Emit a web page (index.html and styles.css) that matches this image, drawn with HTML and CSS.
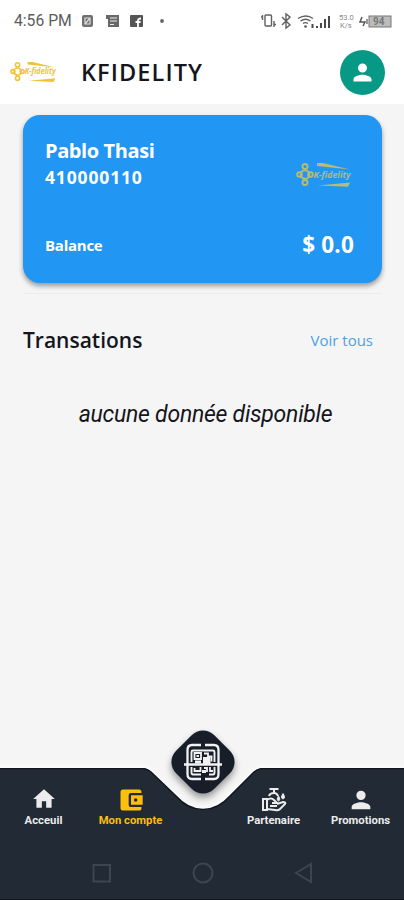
FILE: index.html
```html
<!DOCTYPE html>
<html lang="fr">
<head>
  <meta charset="UTF-8">
  <meta name="viewport" content="width=device-width, initial-scale=1">
  <title>KFIDELITY</title>
  <link rel="stylesheet" href="styles.css">
</head>
<body>
<svg width="0" height="0" class="defs">
  <defs>
    <symbol id="logo" viewBox="0 0 56 26">
      <g fill="none" stroke="currentColor" stroke-width="1.900">
        <circle cx="9" cy="4.500" r="2.500"/>
        <circle cx="9" cy="20.500" r="2.500"/>
        <circle cx="3.500" cy="12.500" r="2.300"/>
        <circle cx="14.500" cy="12.500" r="2.300"/>
        <circle cx="9" cy="12.500" r="4.300"/>
      </g>
      <path d="M21 1 L27 1 L54 7.500 L38 5.800 L21 4 Z" fill="currentColor"/>
      <path d="M22 23.500 L54 20.500 L52 24.800 Z" fill="currentColor"/>
      <text x="17.500" y="15.500" class="logo-text" textLength="37" lengthAdjust="spacingAndGlyphs">K-fidelity</text>
    </symbol>
    <symbol id="person" viewBox="0 0 24 24">
      <path d="M12 12a4 4 0 1 0 0-8 4 4 0 0 0 0 8zm0 2c-2.670 0-8 1.340-8 4v2h16v-2c0-2.660-5.330-4-8-4z" fill="currentColor"/>
    </symbol>
  </defs>
</svg>

<div class="status">
  <span class="time">4:56 PM</span>
  <svg class="status-left" width="88" height="16" viewBox="0 0 88 16">
    <rect x="2" y="2" width="11" height="12" rx="2" fill="#707070"/>
    <path d="M5 11V5h5v6zM5 11l5-6" fill="none" stroke="#ddd" stroke-width="1.200"/>
    <path d="M26 2h13v12H28V6h-2z" fill="#686868"/>
    <path d="M30 5h7M30 8h7M30 11.500h4" stroke="#eee" stroke-width="1.200"/>
    <rect x="50" y="2" width="13" height="12" rx="1" fill="#555"/>
    <path d="M58 14V7.500q0-2 3-2M55.500 9h5" fill="none" stroke="#fff" stroke-width="1.800"/>
    <circle cx="82" cy="8" r="1.900" fill="#666"/>
  </svg>
  <svg class="status-right" width="134" height="18" viewBox="0 0 134 18">
    <g fill="none" stroke="#606060" stroke-width="1.400">
      <rect x="5" y="3" width="6.500" height="11" rx="1"/>
      <path d="M2.500 3v5M1 5h2M14 9v6M14 12.500h2"/>
      <path d="M22 5l8 8-4 3V2l4 3-8 8"/>
      <path d="M38 6.500q8-5 15 0M40.500 9q5-3.500 10 0M43 11.500q2.500-1.800 5 0"/>
    </g>
    <circle cx="45.500" cy="14.500" r="1.300" fill="#555"/>
    <path d="M52.500 12v4M57 14v2M61 11v5M65 7v9M69 4v12" stroke="#484848" stroke-width="2"/>
    <text x="79" y="8" class="rate">53.0</text>
    <text x="80" y="16" class="rate">K/s</text>
    <path d="M102 5l-2 5h5l-2 4" fill="none" stroke="#555" stroke-width="1.500"/>
    <rect x="109" y="4" width="22" height="11" fill="#bcbcbc" stroke="#777"/>
    <path d="M107 7v5" stroke="#777" stroke-width="1.500"/>
    <text x="113" y="13" class="battery">94</text>
  </svg>
</div>

<header class="appbar">
  <svg class="appbar-logo" width="47" height="22"><use href="#logo"/></svg>
  <h1>KFIDELITY</h1>
  <div class="avatar"><svg width="27" height="27"><use href="#person"/></svg></div>
</header>

<main>
  <section class="card">
    <div class="card-top">
      <div>
        <div class="name">Pablo Thasi</div>
        <div class="number">410000110</div>
      </div>
      <svg class="card-logo" width="56" height="26"><use href="#logo"/></svg>
    </div>
    <div class="card-bottom">
      <span class="balance">Balance</span>
      <span class="amount">$ 0.0</span>
    </div>
  </section>
  <div class="divider"></div>
  <div class="section-head">
    <h2>Transations</h2>
    <a class="more">Voir tous</a>
  </div>
  <p class="empty"><span>aucune donnée disponible</span></p>
</main>

<footer class="bottom">
  <svg class="bottom-bg" width="404" height="132" viewBox="0 0 404 132">
    <path d="M0 0H142Q147 0 151 4L176 28C192 46 214 46 230 28L254 4Q258 0 264 0H404V132H0Z" fill="#222a35"/>
    <path d="M0 .5H142Q147 .5 151 4L176 28C192 46 214 46 230 28L254 4Q258 .5 264 .5H404" fill="none" stroke="#10151e" stroke-width="1.500"/>
    <path d="M0 131.500H404" stroke="#10141b"/>
  </svg>
  <div class="scan">
    <svg width="38" height="38" viewBox="0 0 38 38" fill="none" stroke="#f2f2f2">
      <path d="M17 2H8Q3.500 2 3.500 7V31Q3.500 36 8 36H17M21 2H30Q34.500 2 34.500 7V31Q34.500 36 30 36H21" stroke-width="2.300"/>
      <path d="M29 7.500H9Q7.500 7.500 7.500 9V19M29 7.500Q30.500 7.500 30.500 9V19M7.500 24V29.500Q7.500 31.500 9 31.500H17M30.500 24V29.500Q30.500 31.500 29 31.500H25" stroke-width="1.900"/>
      <path d="M10.500 10h6.500v6h-6.500zM20 10.500h4v3h3.500v5M10.500 25v3h6v-4M20 25h3v4M26 24v4h3" stroke-width="1.800"/>
      <path d="M12.500 12h2.500v2h-2.500zM19 14h7.500v8H19zM11 17.500h6v3h-6zM18 27h4v3h-4z" fill="#f2f2f2" stroke="none"/>
      <path d="M0 21.500H38" stroke-width="2.500"/>
    </svg>
  </div>
  <nav>
    <div class="tab tab-home">
      <svg width="26" height="26" viewBox="0 0 24 24"><path d="M10 20v-6h4v6h5v-8h3L12 3 2 12h3v8z" fill="currentColor"/></svg>
      <span>Acceuil</span>
    </div>
    <div class="tab tab-account active">
      <svg width="28" height="28" viewBox="0 0 24 24">
        <path d="M21 18v1c0 1.100-.9 2-2 2H5a2 2 0 0 1-2-2V5c0-1.100.89-2 2-2h14c1.100 0 2 .9 2 2v1h-9a2 2 0 0 0-2 2v8c0 1.100.89 2 2 2h9zm-9-2h10V8H12v8zm4-2.500a1.500 1.500 0 1 1 0-3 1.500 1.500 0 0 1 0 3z" fill="currentColor"/>
      </svg>
      <span>Mon compte</span>
    </div>
    <div class="tab tab-partner">
      <svg width="26" height="26" viewBox="0 0 26 26" fill="none" stroke="currentColor" stroke-width="2">
        <path d="M8.500 3h9M13 3v4M8 10q1-3 5-3 3 0 4 3M2 13h4v11H2zM6 14q4-3 7 0l3 3h-5M16 18l6-2q3 0 2 2l-5 5q-2 2-5 1l-8-1M9 20h7"/>
        <path d="M22 7.500q3 4.500 0 5.500-3-1 0-5.500zM17.500 10q2.500 4 0 5-2.500-1 0-5z" fill="currentColor" stroke-width="1"/>
      </svg>
      <span>Partenaire</span>
    </div>
    <div class="tab tab-promo">
      <svg width="28" height="28"><use href="#person"/></svg>
      <span>Promotions</span>
    </div>
  </nav>
  <div class="system">
    <svg width="222" height="24" viewBox="0 0 222 24" fill="none" stroke="#3d454f" stroke-width="2">
      <rect x="1.500" y="4" width="16.500" height="16.500"/>
      <circle cx="111" cy="12" r="9.500"/>
      <path d="M204 12L219 3V21Z"/>
    </svg>
  </div>
</footer>
</body>
</html>
```
FILE: styles.css
```css
* { box-sizing: border-box; }
body {
  margin: 0;
  width: 404px;
  height: 900px;
  display: flex;
  flex-direction: column;
  overflow: hidden;
  background: #f5f5f5;
  color: #15151c;
  font-family: "Open Sans", "Noto Sans", sans-serif;
}
svg { display: block; flex: none; }
.defs { position: absolute; }
.status {
  height: 42px;
  padding: 0 10px 0 14px;
  background: #fff;
  display: flex;
  align-items: center;
}
.time {
  width: 66px;
  font: 15.7px/20px Roboto, sans-serif;
  color: #5c5c5c;
  white-space: nowrap;
}
.status-right { margin-left: auto; }
.rate { font: 7.5px Roboto, sans-serif; fill: #888; }
.battery { font: bold 10px Roboto, sans-serif; fill: #777; }
.appbar {
  height: 62px;
  padding: 0 19.5px 2px 10px;
  background: #fff;
  display: flex;
  align-items: center;
}
.appbar-logo { color: #eec33b; }
.logo-text {
  font: italic bold 9.5px "Open Sans", sans-serif;
  fill: currentColor;
}
h1 {
  margin: 0 0 0 24px;
  font-size: 23.5px;
  line-height: 30px;
  font-weight: 600;
  letter-spacing: 1.1px;
}
.avatar {
  width: 45px;
  height: 45px;
  margin-left: auto;
  border-radius: 50%;
  background: #079985;
  color: #fff;
  display: grid;
  place-items: center;
}
main {
  flex: 1;
  padding: 11px 22px 0 23px;
}
.card {
  height: 168px;
  padding: 22px 28px 20px 22px;
  border-radius: 17px;
  background: #2196f3;
  box-shadow: 0 3px 5px rgba(0, 0, 0, 0.38);
  color: #fff;
  display: flex;
  flex-direction: column;
  justify-content: space-between;
}
.card-top, .card-bottom, .section-head {
  display: flex;
  justify-content: space-between;
}
.name {
  font-size: 20px;
  line-height: 28px;
  font-weight: 700;
  letter-spacing: -0.4px;
}
.number {
  font-size: 17.5px;
  line-height: 25px;
  font-weight: 700;
  letter-spacing: 0.85px;
}
.card-logo {
  margin: 25px 2px 0 0;
  color: #b6bc71;
}
.card-bottom { align-items: center; }
.balance {
  font-size: 15px;
  font-weight: 700;
  letter-spacing: -0.25px;
}
.amount {
  font-size: 22.5px;
  line-height: 36px;
  font-weight: 700;
  letter-spacing: 0.2px;
}
.divider {
  height: 1px;
  margin-top: 10px;
  background: #ececec;
}
.section-head {
  margin-top: 30px;
  padding-right: 9px;
  align-items: center;
}
h2 {
  margin: 0;
  font-size: 21px;
  line-height: 32px;
  font-weight: 600;
}
.more {
  font-size: 15px;
  color: #4ba1e8;
}
.empty {
  margin: 44px 0 0;
  padding-left: 6px;
  text-align: center;
  font: italic 23px/30px Roboto, sans-serif;
  letter-spacing: -0.25px;
}
.bottom {
  position: relative;
  height: 132px;
  flex: none;
  color: #ececec;
}
.bottom-bg {
  position: absolute;
  left: 0;
  top: 0;
  filter: drop-shadow(0 -1px 2px #fff);
}
/* diamond button that sits in the notch */
.scan {
  position: absolute;
  left: 176px;
  top: -33px;
  width: 54px;
  height: 54px;
  display: grid;
  place-items: center;
}
.scan::before {
  content: "";
  position: absolute;
  inset: 0;
  border-radius: 16px;
  background: #171e29;
  transform: rotate(45deg);
  box-shadow: 3px 3px 7px rgba(0, 0, 0, 0.4);
}
.scan svg { position: relative; }
nav {
  position: relative;
  height: 78px;
  padding-top: 18px;
  display: grid;
  grid-template-columns: 87px 87px 56px 87px 87px;
}
.tab {
  height: 42px;
  display: flex;
  flex-direction: column;
  align-items: center;
  justify-content: space-between;
  font: bold 11.3px/15px Roboto, sans-serif;
}
.tab svg { margin-bottom: -6px; }
.tab-partner { grid-column: 4; }
.active { color: #fbbf0c; }
.system {
  position: relative;
  padding: 15px 0 0 92px;
}
```
